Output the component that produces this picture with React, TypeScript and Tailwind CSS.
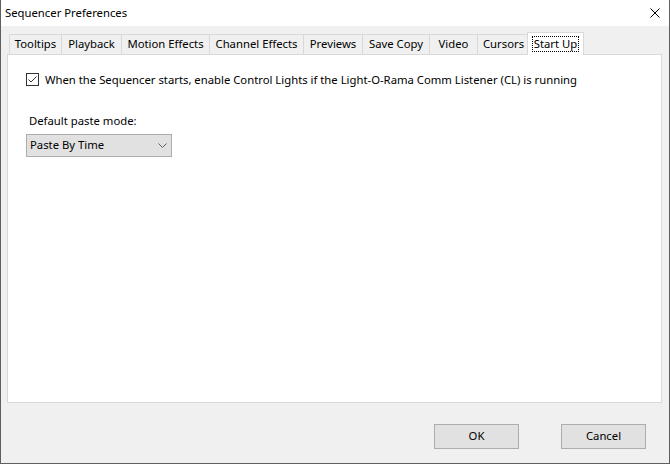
import React from "react";

const tabs = [
  { label: "Tooltips", w: 53 },
  { label: "Playback", w: 61 },
  { label: "Motion Effects", w: 89 },
  { label: "Channel Effects", w: 95 },
  { label: "Previews", w: 60 },
  { label: "Save Copy", w: 68 },
  { label: "Video", w: 49 },
  { label: "Cursors", w: 53 },
];

export default function App() {
  return (
    <div
      className="w-[670px] h-[464px] flex flex-col border-x border-b border-[#5f5f5f] bg-[#f0f0f0] text-[11.3px] text-black"
      style={{ fontFamily: '"Segoe UI", "Noto Sans", "Liberation Sans", sans-serif' }}
    >
      {/* Title bar */}
      <div className="h-[26px] bg-white flex items-center justify-between pl-[4px] pr-[9px]">
        <span className="leading-none">Sequencer Preferences</span>
        <svg width="10" height="10" viewBox="0 0 10 10">
          <path d="M0.5 0.5 L9.5 9.5 M9.5 0.5 L0.5 9.5" stroke="#000" strokeWidth="1" />
        </svg>
      </div>

      <div className="flex flex-col px-[6px] pt-[6px]">
        {/* Tab strip */}
        <div className="h-[22px] flex items-end pl-[2px]">
          {tabs.map((t, i) => (
            <div
              key={t.label}
              className={`h-[20px] flex items-center justify-center border border-b-0 border-[#d9d9d9] bg-[#f0f0f0] ${i > 0 ? "-ml-px" : ""}`}
              style={{ width: t.w }}
            >
              {t.label}
            </div>
          ))}
          <div className="relative z-10 -ml-[3px] -mb-px h-[23px] w-[57px] flex items-start justify-center pt-[3px] border border-b-0 border-[#d9d9d9] bg-white">
            <span className="border border-dotted border-black px-[1px] leading-[14px]">Start Up</span>
          </div>
        </div>

        {/* Panel */}
        <div className="w-[655px] h-[349px] border border-[#d9d9d9] bg-white pl-[18px] pt-[18px]">
          <label className="flex items-center gap-[6px] h-[13px] leading-[13px]">
            <svg width="13" height="13" viewBox="0 0 13 13">
              <rect x="0.5" y="0.5" width="12" height="12" fill="#fff" stroke="#333" />
              <path d="M2.5 6.5 L5 9 L10.5 3.5" fill="none" stroke="#333" strokeWidth="1" />
            </svg>
            <span>When the Sequencer starts, enable Control Lights if the Light-O-Rama Comm Listener (CL) is running</span>
          </label>

          <div className="mt-[27px] pl-[3px] leading-[15px]">Default paste mode:</div>
          <div className="mt-[6px] w-[146px] h-[23px] flex items-center justify-between border border-[#adadad] bg-[#e1e1e1] pl-[3px] pr-[4px]">
            <span>Paste By Time</span>
            <svg width="9" height="5" viewBox="0 0 9 5">
              <path d="M0.5 0.5 L4.5 4.5 L8.5 0.5" fill="none" stroke="#606060" strokeWidth="1" />
            </svg>
          </div>
        </div>

        {/* Buttons */}
        <div className="flex justify-end gap-[42px] pt-[21px] pr-[17px]">
          <button className="w-[85px] h-[25px] border border-[#adadad] bg-[#e1e1e1]">OK</button>
          <button className="w-[85px] h-[25px] border border-[#adadad] bg-[#e1e1e1]">Cancel</button>
        </div>
      </div>
    </div>
  );
}
